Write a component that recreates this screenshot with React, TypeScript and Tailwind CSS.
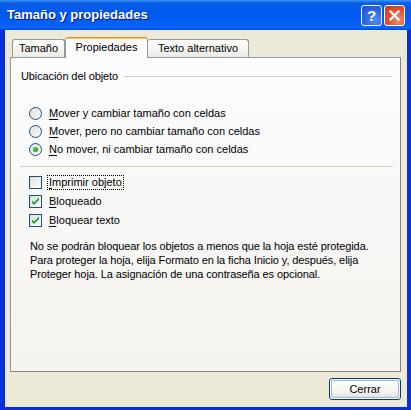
import React from "react";

const font = { fontFamily: '"Liberation Sans", Arial, sans-serif' };

function Radio({ checked }: { checked?: boolean }) {
  return (
    <svg width="13" height="13" viewBox="0 0 13 13" className="shrink-0">
      <defs>
        <linearGradient id="rg" x1="0" y1="0" x2="1" y2="1">
          <stop offset="0" stopColor="#DCDCD7" />
          <stop offset="1" stopColor="#FFFFFF" />
        </linearGradient>
        <radialGradient id="dot" cx="0.4" cy="0.4" r="0.6">
          <stop offset="0" stopColor="#55D551" />
          <stop offset="1" stopColor="#159A11" />
        </radialGradient>
      </defs>
      <circle cx="6.5" cy="6.5" r="6" fill="url(#rg)" stroke="#1C5180" strokeWidth="1" />
      {checked && <circle cx="6.5" cy="6.5" r="2.5" fill="url(#dot)" />}
    </svg>
  );
}

function Check({ checked }: { checked?: boolean }) {
  return (
    <svg width="13" height="13" viewBox="0 0 13 13" className="shrink-0">
      <defs>
        <linearGradient id="cg" x1="0" y1="0" x2="1" y2="1">
          <stop offset="0" stopColor="#DCDCD7" />
          <stop offset="1" stopColor="#FFFFFF" />
        </linearGradient>
      </defs>
      <rect x="0.5" y="0.5" width="12" height="12" fill="url(#cg)" stroke="#1C5180" />
      {checked && (
        <path d="M3 5.5 L5 7.5 L10 2.5 L10 5 L5 10 L3 8 Z" fill="#21A121" />
      )}
    </svg>
  );
}

function U({ c }: { c: string }) {
  return <span className="underline underline-offset-2">{c}</span>;
}

export default function App() {
  return (
    <div
      className="w-[411px] h-[410px] flex flex-col bg-[#0831D9] overflow-hidden text-[11px] text-black"
      style={font}
    >
      {/* Title bar */}
      <div className="h-[30px] shrink-0 flex items-center pl-[7px] pr-[6px] bg-[linear-gradient(to_bottom,#3D95FF_0%,#0A5FE4_10%,#0058EE_40%,#0561F5_85%,#0A66FF_92%,#0048D8_100%)]">
        <div className="flex-1 text-white font-bold text-[13px] [text-shadow:1px_1px_0_#0A1883]">
          Tamaño y propiedades
        </div>
        <div className="flex gap-[2px]">
          <div className="w-[21px] h-[21px] rounded-[3px] border border-white flex items-center justify-center bg-[radial-gradient(circle_at_70%_75%,#4D8DF5_0%,#2A67E0_55%,#1E4FCF_100%)] text-white font-bold text-[15px] leading-none">
            ?
          </div>
          <div className="w-[21px] h-[21px] rounded-[3px] border border-white flex items-center justify-center bg-[radial-gradient(circle_at_70%_75%,#F08C6C_0%,#E0502C_55%,#C13A1A_100%)]">
            <svg width="11" height="11" viewBox="0 0 11 11">
              <path d="M1.5 1.5 L9.5 9.5 M9.5 1.5 L1.5 9.5" stroke="white" strokeWidth="2.2" strokeLinecap="square" />
            </svg>
          </div>
        </div>
      </div>

      {/* Body */}
      <div className="flex-1 mx-[4px] mb-[3px] bg-[#ECE9D8] flex flex-col border-l border-[#0A2BC6]">
        {/* Tabs */}
        <div className="flex items-end h-[21px] mt-[6px] ml-[7px] relative z-10">
          <div className="w-[53px] h-[18px] flex items-center justify-center border border-b-0 border-[#919B9C] rounded-t-[3px] bg-[linear-gradient(to_bottom,#FFFFFF,#ECEBE6)]">
            Tamaño
          </div>
          <div className="w-[83px] h-[21px] -mb-px flex flex-col rounded-t-[3px] overflow-hidden border-x border-[#919B9C] bg-[#FCFCFE]">
            <div className="h-[3px] bg-[#FFC83C] border-t border-[#E68B2C]" />
            <div className="flex-1 flex items-center justify-center pb-[3px]">Propiedades</div>
          </div>
          <div className="w-[101px] h-[18px] flex items-center justify-center border border-b-0 border-l-0 border-[#919B9C] rounded-t-[3px] bg-[linear-gradient(to_bottom,#FFFFFF,#ECEBE6)]">
            Texto alternativo
          </div>
        </div>

        {/* Panel */}
        <div className="flex-1 ml-[5px] mr-[6px] border border-[#919B9C] border-b-[#7E8586] border-r-[#7E8586] bg-[linear-gradient(to_bottom,#FCFCFE,#F4F3EE)] flex flex-col">
          <div className="mt-[12px] pl-[10px] pr-[8px] h-[13px] flex items-center">
            <span className="tracking-[-0.1px]">Ubicación del objeto</span>
            <div className="flex-1 h-px bg-[#D0D0BF] ml-[6px]" />
          </div>

          <div className="mt-[21px] pl-[18px] flex flex-col">
            <div className="h-[18px] flex items-center gap-[7px]">
              <Radio />
              <span><U c="M" />over y cambiar tamaño con celdas</span>
            </div>
            <div className="h-[18px] flex items-center gap-[7px]">
              <Radio />
              <span><U c="M" />over, pero no cambiar tamaño con celdas</span>
            </div>
            <div className="h-[18px] flex items-center gap-[7px]">
              <Radio checked />
              <span><U c="N" />o mover, ni cambiar tamaño con celdas</span>
            </div>
          </div>

          <div className="mt-[8px] ml-[9px] mr-[7px] h-px bg-[#D0D0BF]" />

          <div className="mt-[6px] pl-[18px] flex flex-col">
            <div className="h-[19px] flex items-center gap-[6px]">
              <Check />
              <span className="outline-1 outline-dotted outline-black px-px leading-[13px]"><U c="I" />mprimir objeto</span>
            </div>
            <div className="h-[19px] flex items-center gap-[7px]">
              <Check checked />
              <span><U c="B" />loqueado</span>
            </div>
            <div className="h-[19px] flex items-center gap-[7px]">
              <Check checked />
              <span><U c="B" />loquear texto</span>
            </div>
          </div>

          <p className="mt-[9px] pl-[19px] leading-[14px] whitespace-nowrap tracking-[-0.1px]">
            No se podrán bloquear los objetos a menos que la hoja esté protegida.
            <br />
            Para proteger la hoja, elija Formato en la ficha Inicio y, después, elija
            <br />
            Proteger hoja. La asignación de una contraseña es opcional.
          </p>
        </div>

        <div className="flex justify-end mt-[6px] mb-[7px] mr-[6px]">
          <div className="w-[72px] h-[22px] rounded-[3px] border border-[#003C74] p-px bg-[#F9F8F4]">
            <div className="w-full h-full rounded-[2px] border border-[#9DB9EB] bg-[linear-gradient(to_bottom,#FFFFFF,#F3F3EF_70%,#E3E2DA)] flex items-center justify-center">
              Cerrar
            </div>
          </div>
        </div>
      </div>
    </div>
  );
}
